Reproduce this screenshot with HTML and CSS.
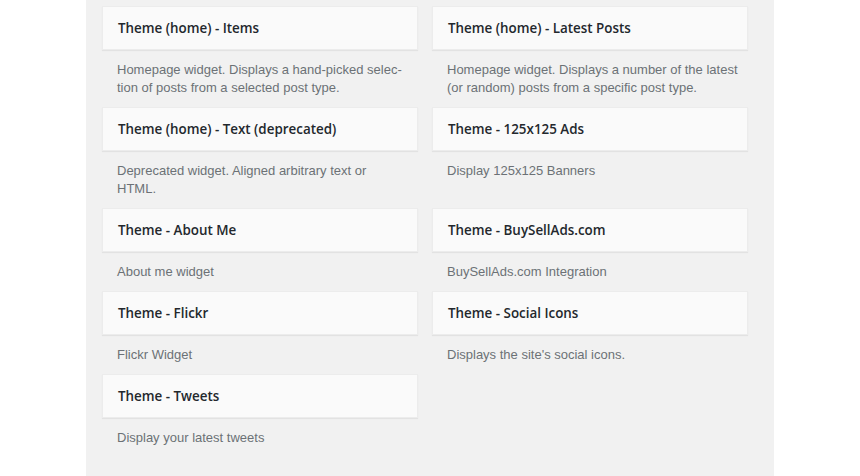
FILE: index.html
```html
<!DOCTYPE html>
<html lang="en">
<head>
<meta charset="utf-8">
<title>Available Widgets</title>
<link rel="stylesheet" href="styles.css">
</head>
<body>
<div class="page">
  <div class="panel">
    <div class="widget-list">
      <div class="widget">
        <div class="widget-top"><h3>Theme (home) - Items</h3></div>
        <div class="widget-description">Homepage widget. Displays a hand-picked selec-<br>tion of posts from a selected post type.</div>
      </div>
      <div class="widget">
        <div class="widget-top"><h3>Theme (home) - Latest Posts</h3></div>
        <div class="widget-description">Homepage widget. Displays a number of the latest<br>(or random) posts from a specific post type.</div>
      </div>
      <div class="widget">
        <div class="widget-top"><h3>Theme (home) - Text (deprecated)</h3></div>
        <div class="widget-description">Deprecated widget. Aligned arbitrary text or<br>HTML.</div>
      </div>
      <div class="widget">
        <div class="widget-top"><h3>Theme - 125x125 Ads</h3></div>
        <div class="widget-description">Display 125x125 Banners</div>
      </div>
      <div class="widget">
        <div class="widget-top"><h3>Theme - About Me</h3></div>
        <div class="widget-description">About me widget</div>
      </div>
      <div class="widget">
        <div class="widget-top"><h3>Theme - BuySellAds.com</h3></div>
        <div class="widget-description">BuySellAds.com Integration</div>
      </div>
      <div class="widget">
        <div class="widget-top"><h3>Theme - Flickr</h3></div>
        <div class="widget-description">Flickr Widget</div>
      </div>
      <div class="widget">
        <div class="widget-top"><h3>Theme - Social Icons</h3></div>
        <div class="widget-description">Displays the site's social icons.</div>
      </div>
      <div class="widget">
        <div class="widget-top"><h3>Theme - Tweets</h3></div>
        <div class="widget-description">Display your latest tweets</div>
      </div>
    </div>
  </div>
</div>
</body>
</html>
```
FILE: styles.css
```css
html, body {
  margin: 0;
  padding: 0;
  background: #ffffff;
  height: 100%;
}
body {
  font-family: "Liberation Sans", Arial, sans-serif;
  color: #23282d;
}
.page {
  display: flex;
  height: 476px;
  overflow: hidden;
}
.panel {
  margin-left: 86px;
  width: 688px;
  background: #f1f1f1;
  padding: 6px 0 0 16px;
  box-sizing: border-box;
}
.widget-list {
  display: grid;
  grid-template-columns: 316px 316px;
  column-gap: 14px;
  align-items: start;
}
.widget-top {
  background: #fafafa;
  border: 1px solid #ececec;
  box-shadow: 0 1px 1px rgba(0, 0, 0, 0.06);
  height: 44px;
  box-sizing: border-box;
  display: flex;
  align-items: center;
  padding: 1px 15px 0 15px;
}
.widget-top h3 {
  margin: 0;
  font-family: "Open Sans", "Liberation Sans", sans-serif;
  font-size: 13.4px;
  font-weight: 600;
  line-height: 1;
  color: #23282d;
}
.widget-description {
  font-size: 13px;
  line-height: 18px;
  color: #6c7176;
  padding: 11px 15px 10px 15px;
  white-space: nowrap;
}
```
